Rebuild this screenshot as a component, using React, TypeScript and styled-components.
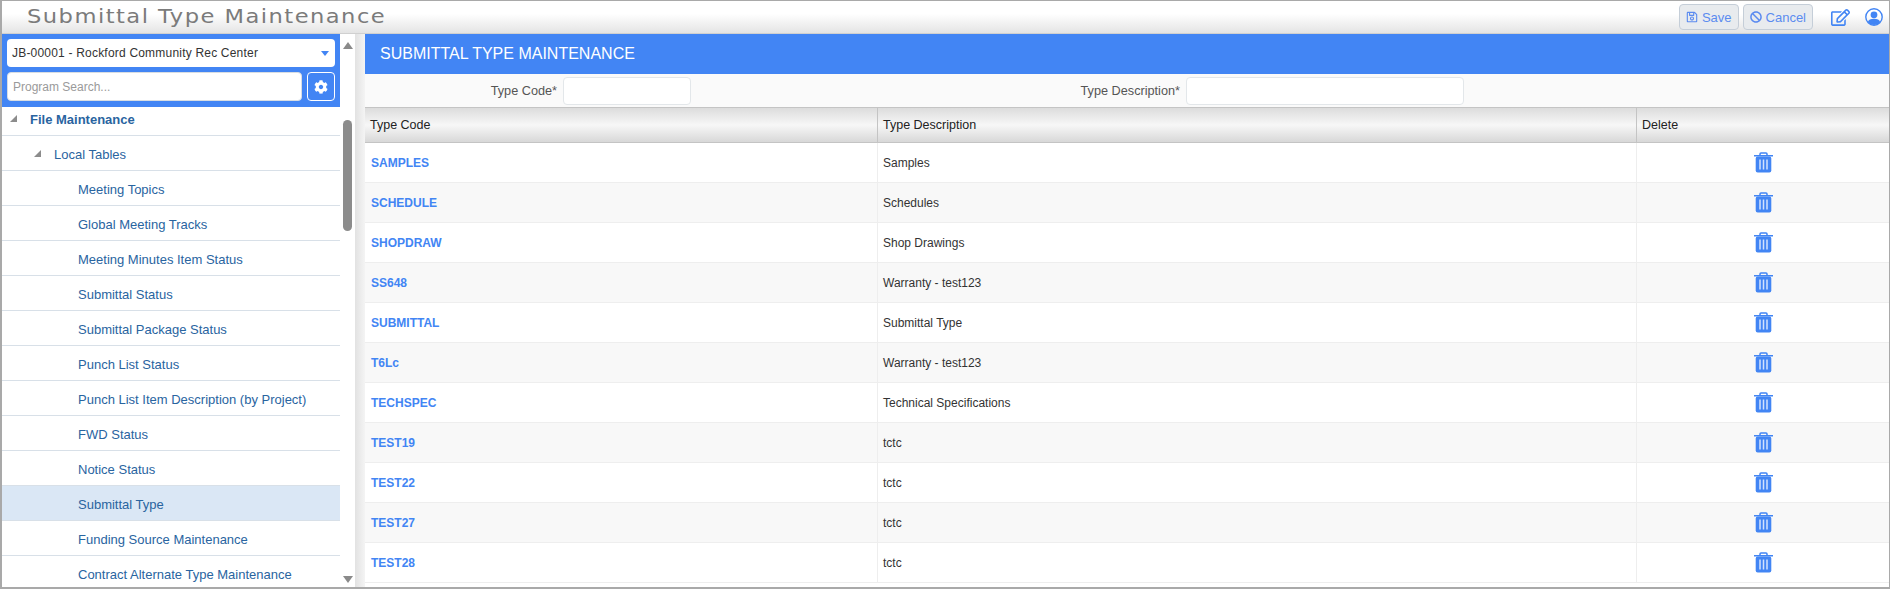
import styled, { createGlobalStyle } from "styled-components";
import { FaBan, FaCog, FaRegEdit, FaRegSave } from "react-icons/fa";

const GlobalStyle = createGlobalStyle`
  html, body {
    margin: 0;
    height: 100%;
    overflow: hidden;
    background: #fff;
  }
  body {
    font-family: "Liberation Sans", Arial, sans-serif;
    font-size: 12px;
    color: #333;
  }
`;

const Page = styled.div`
  width: 1890px;
  height: 589px;
  box-sizing: border-box;
  border: 1px solid #a9a9a9;
  border-left-width: 2px;
  border-bottom-width: 2px;
  display: flex;
  flex-direction: column;
  overflow: hidden;
`;

const TitleBar = styled.header`
  height: 33px;
  flex: none;
  display: flex;
  align-items: center;
  background: linear-gradient(#ffffff, #ffffff 40%, #e4e4e4);
  border-bottom: 1px solid #d0d0d0;
  box-sizing: border-box;
`;

const PageTitle = styled.h1`
  margin: 0 0 2px 25px;
  font-family: "DejaVu Sans", sans-serif;
  font-size: 20px;
  font-weight: normal;
  letter-spacing: 1.3px;
  color: #7b7b7b;
  transform: scaleX(1.13);
  transform-origin: left center;
  white-space: nowrap;
`;

const TitleActions = styled.div`
  margin-left: auto;
  display: flex;
  align-items: center;
`;

const ActionButton = styled.button`
  height: 26px;
  padding: 0 6px;
  margin-left: 4px;
  display: flex;
  align-items: center;
  gap: 4px;
  border: 1px solid #c5ced8;
  border-radius: 4px;
  background: #e8ebee;
  color: #5b8bf0;
  font-family: inherit;
  font-size: 13px;
`;

const IconLink = styled.span<{ $gap: number }>`
  display: flex;
  color: #4285f4;
  margin-left: ${(props) => props.$gap}px;
`;

const Body = styled.div`
  flex: 1;
  min-height: 0;
  display: flex;
`;

const Sidebar = styled.aside`
  width: 338px;
  flex: none;
  display: flex;
  flex-direction: column;
  min-height: 0;
`;

const SidebarHead = styled.div`
  height: 73px;
  flex: none;
  box-sizing: border-box;
  background: #4285f4;
  padding: 5px 5px 0 5px;
`;

const ProjectSelect = styled.div`
  height: 28px;
  box-sizing: border-box;
  background: #fff;
  border-radius: 4px;
  display: flex;
  align-items: center;
  justify-content: space-between;
  padding: 0 6px 0 5px;
  font-size: 12px;
  letter-spacing: 0.2px;
  color: #333;
`;

const Caret = styled.span`
  width: 0;
  height: 0;
  border-left: 4px solid transparent;
  border-right: 4px solid transparent;
  border-top: 5px solid #4285f4;
`;

const SearchRow = styled.div`
  margin-top: 5px;
  display: flex;
  justify-content: space-between;
`;

const SearchBox = styled.div`
  width: 295px;
  height: 29px;
  box-sizing: border-box;
  background: #fff;
  border: 1px solid #d8dde2;
  border-radius: 4px;
  padding-left: 5px;
  display: flex;
  align-items: center;
  color: #9a9a9a;
  font-size: 12px;
`;

const GearButton = styled.div`
  width: 28px;
  height: 29px;
  box-sizing: border-box;
  border: 1px solid #fff;
  border-radius: 4px;
  display: flex;
  align-items: center;
  justify-content: center;
  color: #fff;
`;

const Tree = styled.nav`
  flex: 1;
  min-height: 0;
  overflow: hidden;
`;

const TreeList = styled.div`
  margin-top: -6px;
`;

const TreeRow = styled.div<{ $level: number; $active?: boolean }>`
  height: 35px;
  box-sizing: border-box;
  display: flex;
  align-items: center;
  position: relative;
  padding-left: ${(props) => [28, 52, 76][props.$level]}px;
  padding-top: 2px;
  border-bottom: 1px solid #d8e0e8;
  background: ${(props) => (props.$active ? "#dae7f5" : "#fff")};
  color: #29649f;
  font-size: 13px;
  font-weight: ${(props) => (props.$level === 0 ? "bold" : "normal")};
`;

const TreeArrow = styled.span<{ $level: number }>`
  position: absolute;
  left: ${(props) => (props.$level === 0 ? 8 : 32)}px;
  top: 50%;
  margin-top: -3px;
  width: 0;
  height: 0;
  border-bottom: 7px solid #8c8c8c;
  border-left: 7px solid transparent;
`;

const ScrollBar = styled.div`
  width: 15px;
  flex: none;
  display: flex;
  flex-direction: column;
  align-items: center;
  justify-content: space-between;
  position: relative;
  padding: 8px 0 4px;
  box-sizing: border-box;
`;

const ScrollUp = styled.span`
  width: 0;
  height: 0;
  border-left: 5px solid transparent;
  border-right: 5px solid transparent;
  border-bottom: 7px solid #8a8a8a;
`;

const ScrollDown = styled.span`
  width: 0;
  height: 0;
  border-left: 5px solid transparent;
  border-right: 5px solid transparent;
  border-top: 7px solid #8a8a8a;
`;

const ScrollThumb = styled.span`
  position: absolute;
  left: 3px;
  top: 86px;
  width: 9px;
  height: 111px;
  border-radius: 5px;
  background: #8c8c8c;
`;

const Gutter = styled.div`
  width: 10px;
  flex: none;
  background: linear-gradient(90deg, #e2e2e2, #f4f4f4);
`;

const Main = styled.main`
  flex: 1;
  min-width: 0;
  display: flex;
  flex-direction: column;
`;

const MainHead = styled.div`
  height: 40px;
  flex: none;
  background: #4285f4;
  color: #fff;
  font-size: 16px;
  display: flex;
  align-items: center;
  padding-left: 15px;
`;

const FormRow = styled.div`
  height: 33px;
  flex: none;
  box-sizing: border-box;
  background: #fafafa;
  display: flex;
  align-items: center;
`;

const FieldLabel = styled.label<{ $width: number }>`
  width: ${(props) => props.$width}px;
  flex: none;
  text-align: right;
  padding-right: 6px;
  box-sizing: border-box;
  color: #555;
  font-size: 12.7px;
`;

const FieldInput = styled.div<{ $width: number }>`
  width: ${(props) => props.$width}px;
  height: 28px;
  flex: none;
  box-sizing: border-box;
  background: #fff;
  border: 1px solid #e3e7ea;
  border-radius: 4px;
`;

const Table = styled.div`
  flex: 1;
  min-height: 0;
  overflow: hidden;
  border-top: 1px solid #c4c4c4;
`;

const columns = "513px 759px 1fr";

const HeadRow = styled.div`
  height: 35px;
  box-sizing: border-box;
  display: grid;
  grid-template-columns: ${columns};
  background: linear-gradient(#dcdcdc, #f7f7f7 50%, #d8d8d8);
  border-bottom: 1px solid #c4c4c4;
`;

const HeadCell = styled.div`
  display: flex;
  align-items: center;
  padding-left: 5px;
  color: #222;
  font-size: 12.5px;
  border-right: 1px solid #c4c4c4;
  &:last-child {
    border-right: none;
  }
`;

const DataRow = styled.div<{ $odd: boolean }>`
  height: 40px;
  box-sizing: border-box;
  display: grid;
  grid-template-columns: ${columns};
  background: ${(props) => (props.$odd ? "#f8f8f8" : "#fff")};
  border-bottom: 1px solid #eeeeee;
`;

const Cell = styled.div`
  display: flex;
  align-items: center;
  padding-left: 5px;
  border-right: 1px solid #eeeeee;
  &:last-child {
    border-right: none;
  }
`;

const CodeLink = styled.a`
  color: #4285f4;
  font-weight: bold;
  margin-left: 1px;
`;

const DeleteCell = styled(Cell)`
  justify-content: center;
  padding-left: 0;
  color: #4285f4;
`;

function TrashIcon() {
  return (
    <svg width="19" height="21" viewBox="0 0 19 21" fill="none">
      <path d="M6 3.5V2a1 1 0 0 1 1-1h5a1 1 0 0 1 1 1v1.5" stroke="currentColor" strokeWidth="1.5" />
      <rect x="0" y="3" width="19" height="1.5" fill="currentColor" />
      <rect x="1.7" y="4.5" width="15.6" height="16" rx="2" fill="currentColor" />
      <path d="M6 7.5v10M9.5 7.5v10M13 7.5v10" stroke="#d3e2fd" strokeWidth="1.5" />
    </svg>
  );
}

function UserIcon() {
  return (
    <svg width="18" height="18" viewBox="0 0 18 18" fill="none">
      <circle cx="9" cy="9" r="8.2" stroke="currentColor" strokeWidth="1.4" />
      <circle cx="9" cy="6.8" r="3.4" fill="currentColor" />
      <path d="M2.8 14.2C3.6 11.8 5.6 10.8 9 10.8s5.4 1 6.2 3.4A8 8 0 0 1 9 17a8 8 0 0 1-6.2-2.8Z" fill="currentColor" />
    </svg>
  );
}

const treeItems = [
  "Meeting Topics",
  "Global Meeting Tracks",
  "Meeting Minutes Item Status",
  "Submittal Status",
  "Submittal Package Status",
  "Punch List Status",
  "Punch List Item Description (by Project)",
  "FWD Status",
  "Notice Status",
  "Submittal Type",
  "Funding Source Maintenance",
  "Contract Alternate Type Maintenance",
];

const rows = [
  ["SAMPLES", "Samples"],
  ["SCHEDULE", "Schedules"],
  ["SHOPDRAW", "Shop Drawings"],
  ["SS648", "Warranty - test123"],
  ["SUBMITTAL", "Submittal Type"],
  ["T6Lc", "Warranty - test123"],
  ["TECHSPEC", "Technical Specifications"],
  ["TEST19", "tctc"],
  ["TEST22", "tctc"],
  ["TEST27", "tctc"],
  ["TEST28", "tctc"],
];

export default function App() {
  return (
    <>
      <GlobalStyle />
      <Page>
        <TitleBar>
          <PageTitle>Submittal Type Maintenance</PageTitle>
          <TitleActions>
            <ActionButton>
              <FaRegSave size={12} />
              Save
            </ActionButton>
            <ActionButton>
              <FaBan size={12} />
              Cancel
            </ActionButton>
            <IconLink $gap={18}>
              <FaRegEdit size={19} />
            </IconLink>
            <IconLink $gap={15}>
              <UserIcon />
            </IconLink>
            <IconLink $gap={6} />
          </TitleActions>
        </TitleBar>
        <Body>
          <Sidebar>
            <SidebarHead>
              <ProjectSelect>
                JB-00001 - Rockford Community Rec Center
                <Caret />
              </ProjectSelect>
              <SearchRow>
                <SearchBox>Program Search...</SearchBox>
                <GearButton>
                  <FaCog size={14} />
                </GearButton>
              </SearchRow>
            </SidebarHead>
            <Tree>
              <TreeList>
                <TreeRow $level={0}>
                  <TreeArrow $level={0} />
                  File Maintenance
                </TreeRow>
                <TreeRow $level={1}>
                  <TreeArrow $level={1} />
                  Local Tables
                </TreeRow>
                {treeItems.map((item) => (
                  <TreeRow key={item} $level={2} $active={item === "Submittal Type"}>
                    {item}
                  </TreeRow>
                ))}
              </TreeList>
            </Tree>
          </Sidebar>
          <ScrollBar>
            <ScrollUp />
            <ScrollThumb />
            <ScrollDown />
          </ScrollBar>
          <Gutter />
          <Main>
            <MainHead>SUBMITTAL TYPE MAINTENANCE</MainHead>
            <FormRow>
              <FieldLabel $width={198}>Type Code*</FieldLabel>
              <FieldInput $width={128} />
              <FieldLabel $width={495}>Type Description*</FieldLabel>
              <FieldInput $width={278} />
            </FormRow>
            <Table>
              <HeadRow>
                <HeadCell>Type Code</HeadCell>
                <HeadCell>Type Description</HeadCell>
                <HeadCell>Delete</HeadCell>
              </HeadRow>
              {rows.map(([code, description], i) => (
                <DataRow key={code} $odd={i % 2 === 1}>
                  <Cell>
                    <CodeLink>{code}</CodeLink>
                  </Cell>
                  <Cell>{description}</Cell>
                  <DeleteCell>
                    <TrashIcon />
                  </DeleteCell>
                </DataRow>
              ))}
            </Table>
          </Main>
        </Body>
      </Page>
    </>
  );
}
